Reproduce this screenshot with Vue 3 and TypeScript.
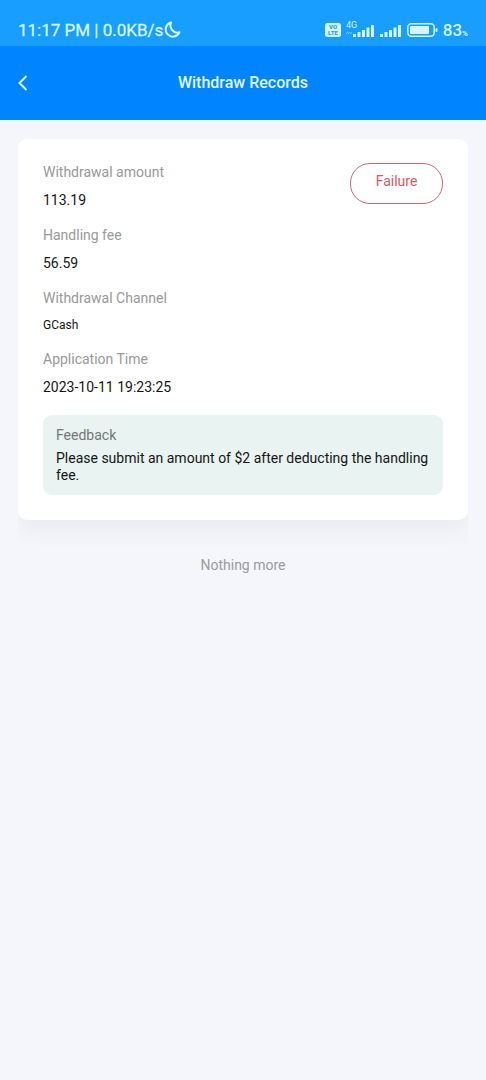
<script setup lang="ts">
interface Field {
  label: string
  value: string
  small?: boolean
}

const fields: Field[] = [
  { label: 'Withdrawal amount', value: '113.19' },
  { label: 'Handling fee', value: '56.59' },
  { label: 'Withdrawal Channel', value: 'GCash', small: true },
  { label: 'Application Time', value: '2023-10-11 19:23:25' },
]
</script>

<template>
  <div class="page">
    <div class="status">
      <div class="status-left">
        <span>11:17 PM | 0.0KB/s</span>
        <svg class="moon" width="18" height="18" viewBox="0 0 18 18" aria-hidden="true">
          <path d="M8 1.500A7.200 7.200 0 1 0 16.500 11.200C14 12.200 11.500 11.500 9.800 9.800C7.800 7.800 6.800 4.500 8 1.500Z" />
        </svg>
      </div>
      <div class="status-right">
        <svg class="volte" width="16" height="14" viewBox="0 0 16 14" aria-hidden="true">
          <rect width="16" height="14" rx="2.5" />
          <text x="8" y="6.4" text-anchor="middle">VO</text>
          <text x="8" y="12.4" text-anchor="middle">LTE</text>
        </svg>
        <svg class="signal" width="29" height="20" viewBox="0 0 29 20" aria-hidden="true">
          <text x="0" y="8">4G</text>
          <path class="faint" d="M0 14l1.5-2 1.5 2M3.5 12l1.2 2 1.3-2" />
          <path d="M7 14h3v3h-3zM11.5 12h3v5h-3zM16 10h3v7h-3zM20.500 7.500h3v9.500h-3zM25 5h3v12h-3z" />
        </svg>
        <svg class="signal" width="22" height="20" viewBox="0 0 22 20" aria-hidden="true">
          <path d="M0 14h3v3h-3zM4.500 12h3v5h-3zM9 10h3v7h-3zM13.500 7.500h3v9.500h-3zM18 5h3v12h-3z" />
        </svg>
        <svg class="battery" width="31" height="14" viewBox="0 0 31 14" aria-hidden="true">
          <rect class="shell" x="0.800" y="0.800" width="26.400" height="12.400" rx="3.500" />
          <rect class="charge" x="3" y="3" width="19" height="8" rx="1" />
          <rect class="charge" x="28.500" y="5" width="2" height="4" rx="1" />
        </svg>
        <span class="percent">83<small>%</small></span>
      </div>
    </div>

    <header class="nav">
      <button class="back" type="button" aria-label="Back">
        <svg width="10" height="16" viewBox="0 0 10 16" aria-hidden="true">
          <path d="M8.500 1L1.500 8L8.500 15" />
        </svg>
      </button>
      <h1>Withdraw Records</h1>
    </header>

    <main>
      <div class="list">
        <article class="card">
          <div class="summary">
            <dl>
              <div v-for="field in fields" :key="field.label" class="field">
                <dt>{{ field.label }}</dt>
                <dd :class="{ small: field.small }">{{ field.value }}</dd>
              </div>
            </dl>
            <span class="state">Failure</span>
          </div>
          <section class="feedback">
            <h2>Feedback</h2>
            <p>Please submit an amount of $2 after deducting the handling fee.</p>
          </section>
        </article>
      </div>
      <p class="end">Nothing more</p>
    </main>
  </div>
</template>

<style>
body {
  background: #f4f6fb;
}
</style>

<style scoped>
.page {
  min-height: 100vh;
  background: #f4f6fb;
  font-family: Roboto, "Liberation Sans", sans-serif;
  font-size: 14px;
  line-height: 18px;
  color: #151515;
}

.status {
  display: flex;
  justify-content: space-between;
  align-items: center;
  box-sizing: border-box;
  height: 46px;
  padding: 13px 18px 0;
  background: #189eff;
  color: #d5f6ff;
  font-size: 17px;
}

.status-left,
.status-right {
  display: flex;
  align-items: center;
}

.status-left {
  -webkit-text-stroke: 0.3px currentColor;
}

.status-right {
  gap: 5px;
}

.moon {
  fill: none;
  stroke: #d5f6ff;
  stroke-width: 2;
  stroke-linejoin: round;
}

.volte rect {
  fill: #d5f6ff;
}

.volte text {
  fill: #189eff;
  font-size: 6px;
  font-weight: 900;
}

.signal {
  fill: #d5f6ff;
}

.signal text {
  font-size: 9px;
}

.faint {
  fill: none;
  stroke: #74c9ff;
}

.shell {
  fill: none;
  stroke: #d5f6ff;
  stroke-width: 1.5;
}

.charge {
  fill: #d5f6ff;
}

.percent {
  font-weight: 500;
}

.percent small {
  font-size: 8px;
  font-weight: 700;
  line-height: 8px;
}

.nav {
  display: grid;
  grid-template-columns: 46px 1fr 46px;
  align-items: center;
  height: 74px;
  background: #0084ff;
  color: #e2faff;
}

.nav h1 {
  margin: 0;
  font-size: 16px;
  font-weight: 500;
  text-align: center;
}

.back {
  display: flex;
  padding: 12px 18px;
  border: 0;
  background: none;
}

.back path {
  fill: none;
  stroke: #e2faff;
  stroke-width: 2;
}

main {
  padding: 0 18px;
}

.list {
  overflow: hidden;
  padding: 19px 0 32px;
}

.card {
  padding: 24px 25px 25px;
  border-radius: 9px;
  background: #fff;
  box-shadow: 0 12px 20px rgba(70, 60, 80, 0.05);
}

.summary {
  display: flex;
  justify-content: space-between;
  align-items: flex-start;
}

dl {
  display: grid;
  gap: 17px;
  margin: 0;
}

dt {
  margin-bottom: 10px;
  color: #999;
}

dd {
  margin: 0;
}

dd.small {
  font-size: 12px;
  line-height: 16px;
}

.state {
  box-sizing: border-box;
  min-width: 93px;
  padding: 8px 24px 13px;
  border: 1px solid #c9686e;
  border-radius: 20px;
  color: #d45b61;
  text-align: center;
}

.feedback {
  margin-top: 19px;
  padding: 12px 13px 11px;
  border-radius: 9px;
  background: #e9f3f2;
  line-height: 17px;
}

.feedback h2 {
  margin: 0 0 6px;
  color: #717776;
  font-size: 14px;
  font-weight: 400;
}

.feedback p {
  margin: 0;
}

.end {
  margin: 4px 0 0;
  color: #999ba0;
  text-align: center;
}
</style>
